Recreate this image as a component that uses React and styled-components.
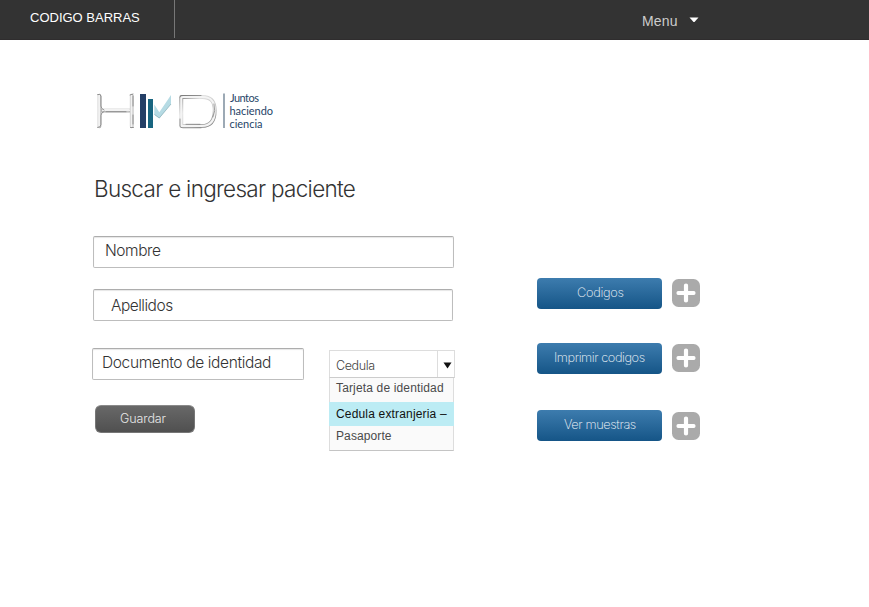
import React from "react";
import styled, { createGlobalStyle } from "styled-components";

const GlobalStyle = createGlobalStyle`
  *, *::before, *::after { box-sizing: border-box; }
  body { margin: 0; background: #fff; font-family: "Liberation Sans", Arial, sans-serif; }
  #root { width: 869px; height: 607px; overflow: hidden; }
`;

const TopBar = styled.header`
  display: flex;
  justify-content: space-between;
  height: 40px;
  background: #333;
  border-bottom: 1px solid #2f2d2e;
`;

const Brand = styled.div`
  width: 175px;
  height: 38px;
  padding: 10px 0 0 30px;
  border-right: 1px solid #777;
  color: #fff;
  font-size: 13px;
  line-height: 15px;
  white-space: nowrap;
`;

const MenuButton = styled.div`
  display: flex;
  gap: 11px;
  width: 227px;
  padding-top: 13px;
  color: #ccc;
  font-size: 14px;
  line-height: 16px;
  letter-spacing: 0.2px;
  svg { margin-top: 4px; }
`;

const Page = styled.main`
  display: flex;
  align-items: flex-start;
  padding: 52px 0 0 92px;
`;

const FormColumn = styled.section`
  display: flex;
  flex-direction: column;
  width: 445px;
`;

const Logo = styled.svg`
  display: block;
  margin-left: 3px;
`;

const Title = styled.h1`
  margin: 43px 0 0 2px;
  height: 62px;
  color: #333;
  font-family: Inter, "Liberation Sans", sans-serif;
  font-size: 22.5px;
  font-weight: 300;
  line-height: 28px;
  letter-spacing: ${(p) => p.$tracking}px;
  white-space: nowrap;
`;

const Field = styled.div`
  width: ${(p) => p.$width}px;
  height: 32px;
  margin: ${(p) => p.$margin};
  padding: ${(p) => p.$padding};
  border: 1px solid #bdbdbd;
  border-top-color: #adadad;
  border-radius: 2px;
  box-shadow: inset 0 1px 1px rgba(0, 0, 0, 0.1);
  color: #333;
  font-family: Inter, "Liberation Sans", sans-serif;
  font-size: 15.5px;
  font-weight: 300;
  line-height: 20px;
  letter-spacing: ${(p) => p.$tracking}px;
  white-space: nowrap;
`;

const DocumentRow = styled.div`
  display: flex;
  align-items: flex-start;
  height: 103px;
`;

const DocumentGroup = styled.div`
  width: 237px;
`;

const SaveButton = styled.div`
  width: 100px;
  height: 28px;
  margin: 25px 0 0 3px;
  padding: 5px 0 0 24px;
  border: 1px solid #777;
  border-top-color: #8a8a8a;
  border-radius: 6px;
  background: linear-gradient(#686868, #505050);
  color: #e8e8e8;
  font-family: Inter, "Liberation Sans", sans-serif;
  font-size: 12.5px;
  font-weight: 300;
  line-height: 16px;
  letter-spacing: -0.1px;
`;

const Select = styled.div`
  width: 126px;
  margin-top: 2px;
`;

const SelectHead = styled.div`
  display: flex;
  height: 28px;
  border: 1px solid #ddd;
  border-bottom-color: #ccc;
`;

const SelectValue = styled.div`
  width: 108px;
  padding: 7px 0 0 6px;
  border-right: 1px solid #ddd;
  color: #444;
  font-family: Inter, "Liberation Sans", sans-serif;
  font-size: 12.5px;
  font-weight: 300;
  line-height: 16px;
  letter-spacing: -0.4px;
`;

const Arrow = styled.svg`
  display: block;
  margin: 11px 0 0 5px;
`;

const Options = styled.div`
  width: 125px;
  height: 73px;
  border: 1px solid #ddd;
  border-top: 0;
  border-bottom-color: #c4c4c4;
  background: #fafafa;
`;

const Option = styled.div`
  height: 24px;
  margin: 0 ${(p) => (p.$active ? "-1px" : "0")};
  padding: ${(p) => p.$top}px 0 0 ${(p) => (p.$active ? 7 : 6)}px;
  background: ${(p) => (p.$active ? "#bcecf4" : "transparent")};
  color: ${(p) => (p.$active ? "#111" : "#4a4a4a")};
  font-size: 12px;
  line-height: 14px;
  letter-spacing: ${(p) => p.$tracking}px;
  white-space: nowrap;
`;

const Actions = styled.aside`
  width: 163px;
  padding-top: 186px;
`;

const ActionRow = styled.div`
  display: flex;
  gap: 10px;
  height: ${(p) => p.$height}px;
`;

const ActionButton = styled.div`
  width: 125px;
  height: 31px;
  padding: 7px 0 0 ${(p) => p.$left}px;
  border-radius: 4px;
  background: linear-gradient(#3d7cae, #155587);
  color: #f2f6fa;
  font-family: Inter, "Liberation Sans", sans-serif;
  font-size: 12.8px;
  font-weight: 200;
  line-height: 16px;
  letter-spacing: ${(p) => p.$tracking}px;
  white-space: nowrap;
`;

const AddIcon = styled.svg`
  display: block;
  margin-top: ${(p) => p.$top}px;
`;

function Plus({ top }) {
  return (
    <AddIcon $top={top} width="28" height="28" viewBox="0 0 28 28">
      <rect width="28" height="28" rx="6.5" fill="#aaa" />
      <path d="M14 6.500v15M6.500 14h15" stroke="#fff" strokeWidth="4.200" strokeLinecap="round" />
      <path d="M14 5.500v17M5.500 14h17" stroke="#fff" strokeWidth="3" />
    </AddIcon>
  );
}

function BrandLogo() {
  return (
    <Logo width="182" height="40" viewBox="95 92 182 40">
      <defs>
        <linearGradient id="chrome" x1="0" y1="0" x2="1" y2="1">
          <stop offset="0" stopColor="#888" />
          <stop offset="0.3" stopColor="#e0e0e0" />
          <stop offset="0.7" stopColor="#c0c0c0" />
          <stop offset="1" stopColor="#777" />
        </linearGradient>
      </defs>
      <g fill="none" strokeLinecap="round" strokeLinejoin="round">
        <path d="M99.500 95.500v31M131.700 95.500v31M101 110.600h30" stroke="#b4b4b4" strokeWidth="3.600" />
        <path d="M99.200 95.500v31M131.500 95.500v31M103 110.200h26" stroke="#f2f2f2" strokeWidth="2.200" />
        <path d="M97.500 94.500q2.500-1 3.500 1.500v10q0 3 3 4M97.500 127.500q3.500 0 3.500-3v-9q0-3 3-4M130 95l3-1M130.500 127.500h3M133 96v10M133 115v9M106 111.700h20" stroke="#808080" strokeWidth="0.800" />
        <path d="M181.300 97h21c8.500 0 12.400 4 12.400 13.500 0 10-4.300 15.500-13 15.500h-20.400v-29" stroke="url(#chrome)" strokeWidth="3.800" />
        <path d="M181.300 97h21c8.500 0 12.400 4 12.400 13.500 0 10-4.300 15.500-13 15.500h-20.400v-29" stroke="#f4f4f4" strokeWidth="2.200" />
        <path d="M180 97q0-1.500 3-1.500h18M180 119v7q0 1.800 3 1.800h18M186 124.300h14M214 104q2 7-1 13" stroke="#777" strokeWidth="0.700" />
      </g>
      <path d="M140 94h6v34h-6z" fill="#243f66" />
      <path d="M148 99h5v29h-5z" fill="#186580" />
      <path d="M154.300 104.500l5 7.700 11.700-17.200v9l-11.700 14.300-5-3.600z" fill="#b6dbe4" />
      <path d="M154.500 114.500l4.800 3.500L171 104" fill="none" stroke="#86adb6" strokeWidth="0.700" />
      <path d="M224 93.500v34.500" stroke="#4b6378" strokeWidth="1.100" />
      <g fill="#1f4568" fontFamily="Lato, sans-serif" fontSize="11">
        <text x="230" y="101.500" textLength="29">Juntos</text>
        <text x="229.500" y="114.500" textLength="43.500">haciendo</text>
        <text x="229.500" y="127.500" textLength="33">ciencia</text>
      </g>
    </Logo>
  );
}

export default function App() {
  return (
    <>
      <GlobalStyle />
      <TopBar>
        <Brand>CODIGO BARRAS</Brand>
        <MenuButton>
          Menu
          <svg width="10" height="6" viewBox="0 0 10 6"><path d="M.5.500h9L5.500 5h-1z" fill="#fff" /></svg>
        </MenuButton>
      </TopBar>
      <Page>
        <FormColumn>
          <BrandLogo />
          <Title $tracking={-0.7}>Buscar e ingresar paciente</Title>
          <Field $width={361} $margin="-1px 0 0 1px" $padding="4px 0 0 11px" $tracking={-0.45}>Nombre</Field>
          <Field $width={360} $margin="21px 0 27px 1px" $padding="6px 0 0 17px" $tracking={-0.5}>Apellidos</Field>
          <DocumentRow>
            <DocumentGroup>
              <Field $width={212} $margin="0" $padding="4px 0 0 9px" $tracking={-0.36}>Documento de identidad</Field>
              <SaveButton>Guardar</SaveButton>
            </DocumentGroup>
            <Select>
              <SelectHead>
                <SelectValue>Cedula</SelectValue>
                <Arrow width="9" height="7" viewBox="0 0 9 7"><path d="M.5.500h8l-4 6z" fill="#111" /></Arrow>
              </SelectHead>
              <Options>
                <Option $top={3} $tracking={0.15}>Tarjeta de identidad</Option>
                <Option $active $top={5} $tracking={0.17}>Cedula extranjeria –</Option>
                <Option $top={3} $tracking={0.1}>Pasaporte</Option>
              </Options>
            </Select>
          </DocumentRow>
        </FormColumn>
        <Actions>
          <ActionRow $height={65}>
            <ActionButton $left={40} $tracking={-0.3}>Codigos</ActionButton>
            <Plus top={1} />
          </ActionRow>
          <ActionRow $height={67}>
            <ActionButton $left={17} $tracking={-0.44}>Imprimir codigos</ActionButton>
            <Plus top={1} />
          </ActionRow>
          <ActionRow $height={31}>
            <ActionButton $left={27} $tracking={-0.4}>Ver muestras</ActionButton>
            <Plus top={2} />
          </ActionRow>
        </Actions>
      </Page>
    </>
  );
}
